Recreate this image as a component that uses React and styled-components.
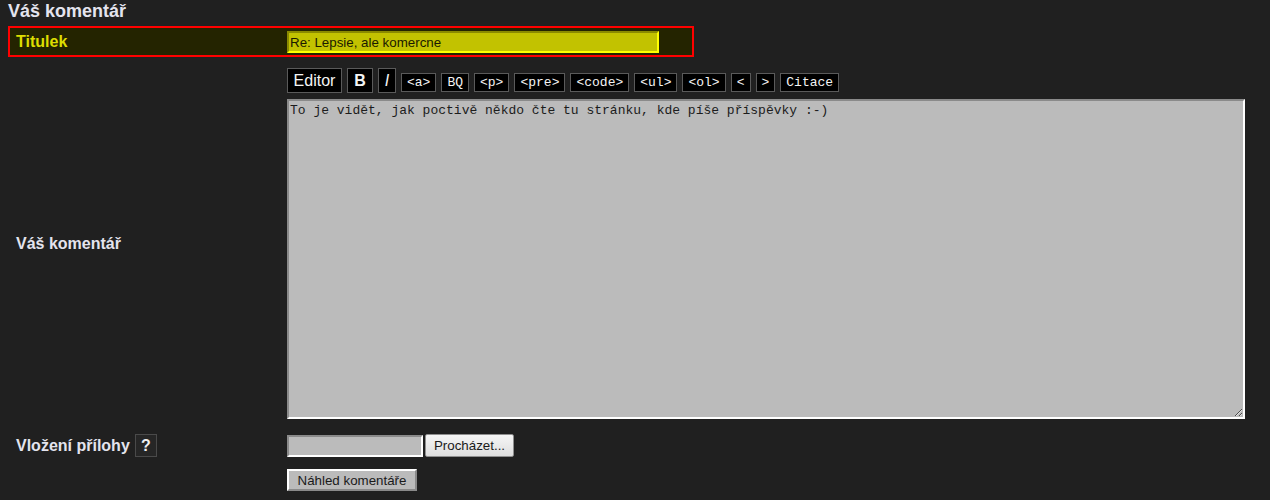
import React from "react"
import styled, { createGlobalStyle } from "styled-components"

const Global = createGlobalStyle`
  html, body {
    margin: 0;
    background: #202020;
  }
  body {
    font-family: "Liberation Sans", Arial, sans-serif;
    color: #e4e4ee;
  }
`

const Page = styled.div`
  padding: 0 8px;
`

const Heading = styled.h2`
  margin: 0 0 4px;
  font-size: 18px;
  line-height: 22px;
  font-weight: bold;
  color: #e4e4ee;
`

const TitleBox = styled.div`
  width: 682px;
  height: 27px;
  border: 2px solid #ff0000;
  background: #242400;
  display: grid;
  grid-template-columns: 277px 1fr;
  align-items: center;
`

const Label = styled.label`
  padding-left: ${(p) => (p.$inset ? 6 : 8)}px;
  font-size: 16px;
  font-weight: bold;
  color: ${(p) => p.$color || "#e4e4ee"};
  display: flex;
  align-items: center;
  gap: 5px;
`

const TitleInput = styled.input`
  box-sizing: border-box;
  width: 372px;
  height: 22px;
  margin-top: 1px;
  padding: 0 1px;
  border: 2px solid;
  border-color: #8a8a00 #ffff00 #ffff00 #8a8a00;
  background: #c2c200;
  color: #1a1a00;
  font: 13.33px "Liberation Sans", Arial, sans-serif;
  outline: none;
`

const Row = styled.div`
  display: grid;
  grid-template-columns: 279px 1fr;
  align-items: center;
  margin-top: ${(p) => p.$mt || 0}px;
`

const Cell = styled.div`
  display: flex;
  flex-direction: column;
  gap: 6px;
`

const Toolbar = styled.div`
  display: flex;
  align-items: flex-end;
  gap: 5px;
  height: 25px;
`

const ToolButton = styled.button`
  box-sizing: border-box;
  height: ${(p) => (p.$big ? 25 : 19)}px;
  min-width: ${(p) => p.$w || 0}px;
  padding: 0 5px;
  margin-bottom: ${(p) => (p.$big ? 0 : 1)}px;
  border: 1px solid #5a5a5a;
  background: #000;
  color: #f4f4f4;
  font-family: ${(p) =>
    p.$big ? '"Liberation Sans", Arial, sans-serif' : '"Liberation Mono", "Courier New", monospace'};
  font-size: ${(p) => (p.$big ? 16 : 13)}px;
  font-weight: ${(p) => (p.$bold ? "bold" : "normal")};
  font-style: ${(p) => (p.$italic ? "italic" : "normal")};
  line-height: 1;
  cursor: pointer;
`

const Comment = styled.textarea`
  box-sizing: border-box;
  width: 958px;
  height: 320px;
  padding: 2px 1px;
  border: 2px solid;
  border-color: #8a8a8a #ffffff #ffffff #8a8a8a;
  background: #bbbbbb;
  color: #1c1c1c;
  font: 13px "Liberation Mono", "Courier New", monospace;
  outline: none;
  resize: both;
`

const Help = styled.span`
  display: inline-flex;
  align-items: center;
  justify-content: center;
  width: 20px;
  height: 21px;
  border: 1px solid #4a4a4a;
  background: #262626;
  color: #f0f0f0;
  font-size: 16px;
`

const FileRow = styled.div`
  display: flex;
  gap: 2px;
  align-items: center;
`

const FileField = styled.div`
  box-sizing: border-box;
  width: 136px;
  height: 22px;
  border: 2px solid;
  border-color: #8a8a8a #ffffff #ffffff #8a8a8a;
  background: #bbbbbb;
`

const Browse = styled.button`
  box-sizing: border-box;
  width: 89px;
  height: 23px;
  border: 1px solid #8f8f8f;
  border-radius: 2px;
  background: linear-gradient(#f6f6f6, #dedede);
  color: #1a1a1a;
  font: 13.33px "Liberation Sans", Arial, sans-serif;
  padding: 0;
`

const Preview = styled.button`
  box-sizing: border-box;
  width: 130px;
  height: 22px;
  border: 2px solid;
  border-color: #ffffff #8a8a8a #8a8a8a #ffffff;
  background: #bbbbbb;
  color: #1a1a1a;
  font: 13.33px "Liberation Sans", Arial, sans-serif;
  padding: 0;
`

const tools = ["<a>", "BQ", "<p>", "<pre>", "<code>", "<ul>", "<ol>", "<", ">", "Citace"]

export default function App() {
  return (
    <Page>
      <Global />
      <Heading>Váš komentář</Heading>
      <TitleBox>
        <Label $inset $color="#dede00">Titulek</Label>
        <TitleInput defaultValue="Re: Lepsie, ale komercne" />
      </TitleBox>
      <Row $mt={11}>
        <Label>Váš komentář</Label>
        <Cell>
          <Toolbar>
            <ToolButton $big $w={55}>Editor</ToolButton>
            <ToolButton $big $bold $w={26}>B</ToolButton>
            <ToolButton $big $italic $w={18}>I</ToolButton>
            {tools.map((t) => (
              <ToolButton key={t}>{t}</ToolButton>
            ))}
          </Toolbar>
          <Comment defaultValue="To je vidět, jak poctivě někdo čte tu stránku, kde píše příspěvky :-)" />
        </Cell>
      </Row>
      <Row $mt={15}>
        <Label>
          Vložení přílohy <Help>?</Help>
        </Label>
        <FileRow>
          <FileField />
          <Browse>Procházet...</Browse>
        </FileRow>
      </Row>
      <Row $mt={12}>
        <span />
        <div>
          <Preview>Náhled komentáře</Preview>
        </div>
      </Row>
    </Page>
  )
}
